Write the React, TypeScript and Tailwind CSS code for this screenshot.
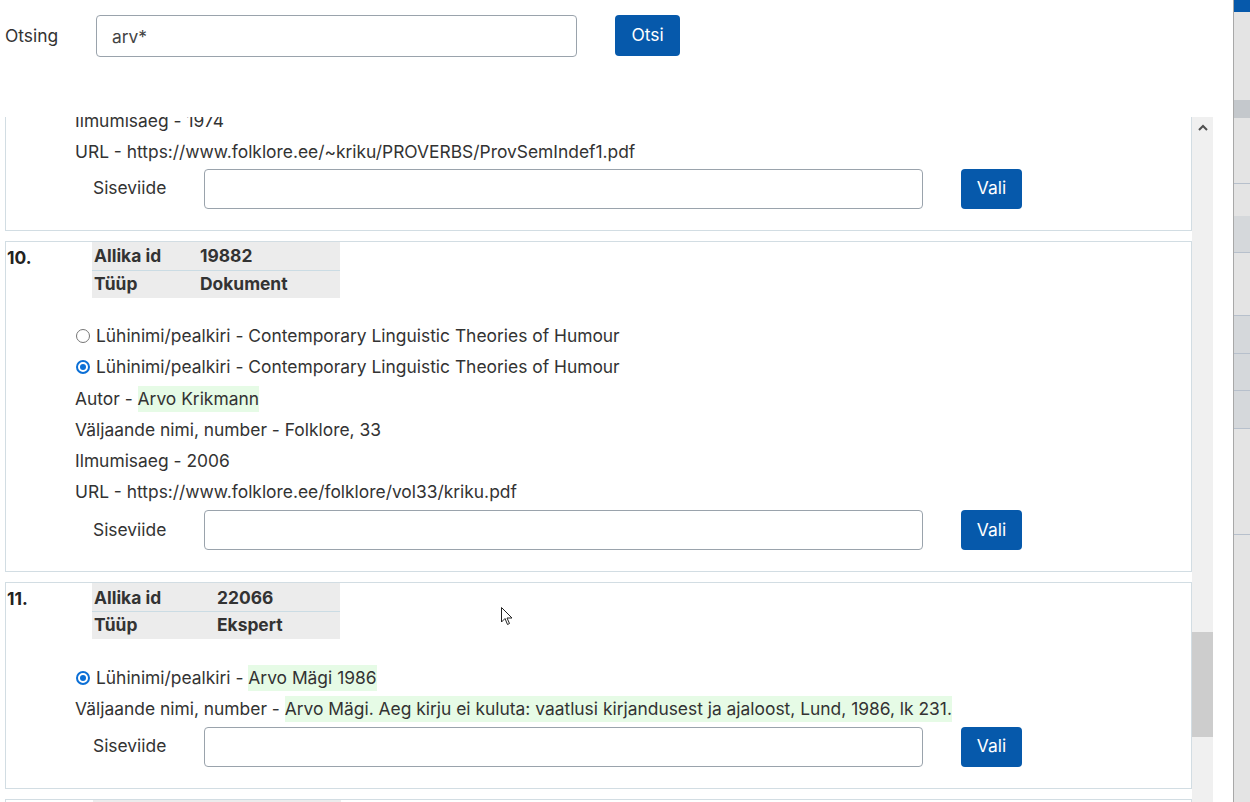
import { useState } from "react";

type Line = { label: string; value: string; mark?: boolean; radio?: "on" | "off" };

type Source = {
  nr: string;
  id: string;
  type: string;
  col: string;
  lines: Line[];
};

const sources: Source[] = [
  {
    nr: "10.",
    id: "19882",
    type: "Dokument",
    col: "w-[106px]",
    lines: [
      { label: "Lühinimi/pealkiri", value: "Contemporary Linguistic Theories of Humour", radio: "off" },
      { label: "Lühinimi/pealkiri", value: "Contemporary Linguistic Theories of Humour", radio: "on" },
      { label: "Autor", value: "Arvo Krikmann", mark: true },
      { label: "Väljaande nimi, number", value: "Folklore, 33" },
      { label: "Ilmumisaeg", value: "2006" },
      { label: "URL", value: "https://www.folklore.ee/folklore/vol33/kriku.pdf" },
    ],
  },
  {
    nr: "11.",
    id: "22066",
    type: "Ekspert",
    col: "w-[123px]",
    lines: [
      { label: "Lühinimi/pealkiri", value: "Arvo Mägi 1986", mark: true, radio: "on" },
      {
        label: "Väljaande nimi, number",
        value: "Arvo Mägi. Aeg kirju ei kuluta: vaatlusi kirjandusest ja ajaloost, Lund, 1986, lk 231.",
        mark: true,
      },
    ],
  },
];

function Radio({ on }: { on: boolean }) {
  return on ? (
    <span className="mr-[6px] ml-[1px] flex h-[14px] w-[14px] items-center justify-center rounded-full border-2 border-[#0b6fd6] bg-white">
      <span className="h-[6px] w-[6px] rounded-full bg-[#0b6fd6]" />
    </span>
  ) : (
    <span className="mr-[6px] ml-[1px] h-[14px] w-[14px] rounded-full border border-[#767676] bg-white" />
  );
}

function InfoLine({ line }: { line: Line }) {
  return (
    <div className="flex h-[31.25px] items-center whitespace-pre">
      {line.radio && <Radio on={line.radio === "on"} />}
      <span>{line.label + " - "}</span>
      <span className={line.mark ? "bg-[#e6fbe6]" : ""}>{line.value}</span>
    </div>
  );
}

function RefRow({ className = "" }: { className?: string }) {
  const [val, setVal] = useState("");
  return (
    <div className={"flex items-center pl-[87px] " + className}>
      <span className="w-[111px]">Siseviide</span>
      <input
        value={val}
        onChange={(e) => setVal(e.target.value)}
        className="h-[40px] w-[719px] rounded-[4px] border border-[#9aa3ac] bg-white px-3 outline-none"
      />
      <button className="ml-[38px] h-[40px] w-[61px] rounded-[4px] bg-[#0659ab] text-white">Vali</button>
    </div>
  );
}

function SourceCard({ s }: { s: Source }) {
  return (
    <div className="ml-[5px] border border-[#d2dde3] pb-[21px]">
      <div className="flex">
        <div className="w-[86px] pl-[1px] pt-[3px] font-bold text-[#222]">{s.nr}</div>
        <div className="w-[248px] bg-[#ececec] font-bold">
          <div className="flex h-[29px] items-center border-b border-[#cbdce4] pl-[2px] pt-[2px]">
            <span className={s.col}>Allika id</span>
            <span>{s.id}</span>
          </div>
          <div className="flex h-[27px] items-center pl-[2px]">
            <span className={s.col}>Tüüp</span>
            <span>{s.type}</span>
          </div>
        </div>
      </div>
      <div className="mt-[23px] pl-[69px]">
        {s.lines.map((l, i) => (
          <InfoLine key={i} line={l} />
        ))}
      </div>
      <RefRow className="mt-[2px]" />
    </div>
  );
}

export default function App() {
  const [query, setQuery] = useState("arv*");

  return (
    <div className="relative flex h-[802px] w-[1250px] overflow-hidden bg-white font-['Inter',sans-serif] text-[17.4px] text-[#333]">
      <div className="flex w-[1233px] flex-col">
        {/* search bar */}
        <div className="flex h-[117px] shrink-0 items-start pl-[5px] pt-[15px]">
          <span className="flex h-[42px] w-[91px] items-center">Otsing</span>
          <input
            value={query}
            onChange={(e) => setQuery(e.target.value)}
            className="h-[42px] w-[481px] rounded-[4px] border border-[#9aa3ac] px-[15px] text-[#444] outline-none"
          />
          <button className="ml-[38px] h-[41px] w-[65px] rounded-[4px] bg-[#0659ab] text-white">Otsi</button>
        </div>

        {/* results list */}
        <div className="flex min-h-0 flex-1">
          <div className="w-[1192px] overflow-hidden">
            <div className="-mt-[12px] flex flex-col gap-[10px]">
              <div className="ml-[5px] border border-t-0 border-[#d2dde3] pb-[21px]">
                <div className="pl-[69px]">
                  <InfoLine line={{ label: "Ilmumisaeg", value: "1974" }} />
                  <InfoLine line={{ label: "URL", value: "https://www.folklore.ee/~kriku/PROVERBS/ProvSemIndef1.pdf" }} />
                </div>
                <RefRow className="mt-[1px]" />
              </div>
              {sources.map((s) => (
                <SourceCard key={s.nr} s={s} />
              ))}
              <div className="ml-[5px] h-[40px] border border-[#d2dde3]">
                <div className="ml-[87px] h-full w-[248px] bg-[#ececec]" />
              </div>
            </div>
          </div>
          {/* scrollbar */}
          <div className="flex w-[21px] flex-col bg-[#f0f0f0]">
            <div className="flex h-[21px] items-center justify-center">
              <svg width="10" height="7" viewBox="0 0 10 7">
                <path d="M1 6 L5 2 L9 6" fill="none" stroke="#505050" strokeWidth="2" />
              </svg>
            </div>
            <div className="h-[494px]" />
            <div className="h-[105px] bg-[#cdcdcd]" />
          </div>
          <div className="w-[20px]" />
        </div>
      </div>

      {/* page behind, right edge */}
      <div className="flex w-[17px] flex-col border-l border-[#a8a8a8] bg-[#e4e4e4]">
        <div className="h-[12px] bg-[#0659ab]" />
        <div className="h-[88px]" />
        <div className="h-[18px] bg-[#c4c8cc]" />
        <div className="h-[66px] border-b border-[#b7c0cc]" />
        <div className="h-[32px]" />
        <div className="h-[37px] border-b border-[#b7c0cc] bg-[#d5d8db]" />
        <div className="h-[63px] border-b border-[#b7c0cc]" />
        <div className="h-[38px] border-b border-[#b7c0cc] bg-[#d5d8db]" />
        <div className="h-[37px] border-b border-[#b7c0cc] bg-[#d5d8db]" />
        <div className="h-[38px] border-b border-[#b7c0cc] bg-[#d5d8db]" />
        <div className="h-[106px] border-b border-[#b7c0cc]" />
      </div>

      {/* mouse pointer */}
      <svg className="absolute left-[501px] top-[607px]" width="12" height="19" viewBox="0 0 12 19">
        <path d="M0.5 0.5 L0.5 15 L4 11.5 L6.5 17.5 L8.5 16.5 L6 11 L11 11 Z" fill="white" stroke="#222" strokeWidth="1" />
      </svg>
    </div>
  );
}
